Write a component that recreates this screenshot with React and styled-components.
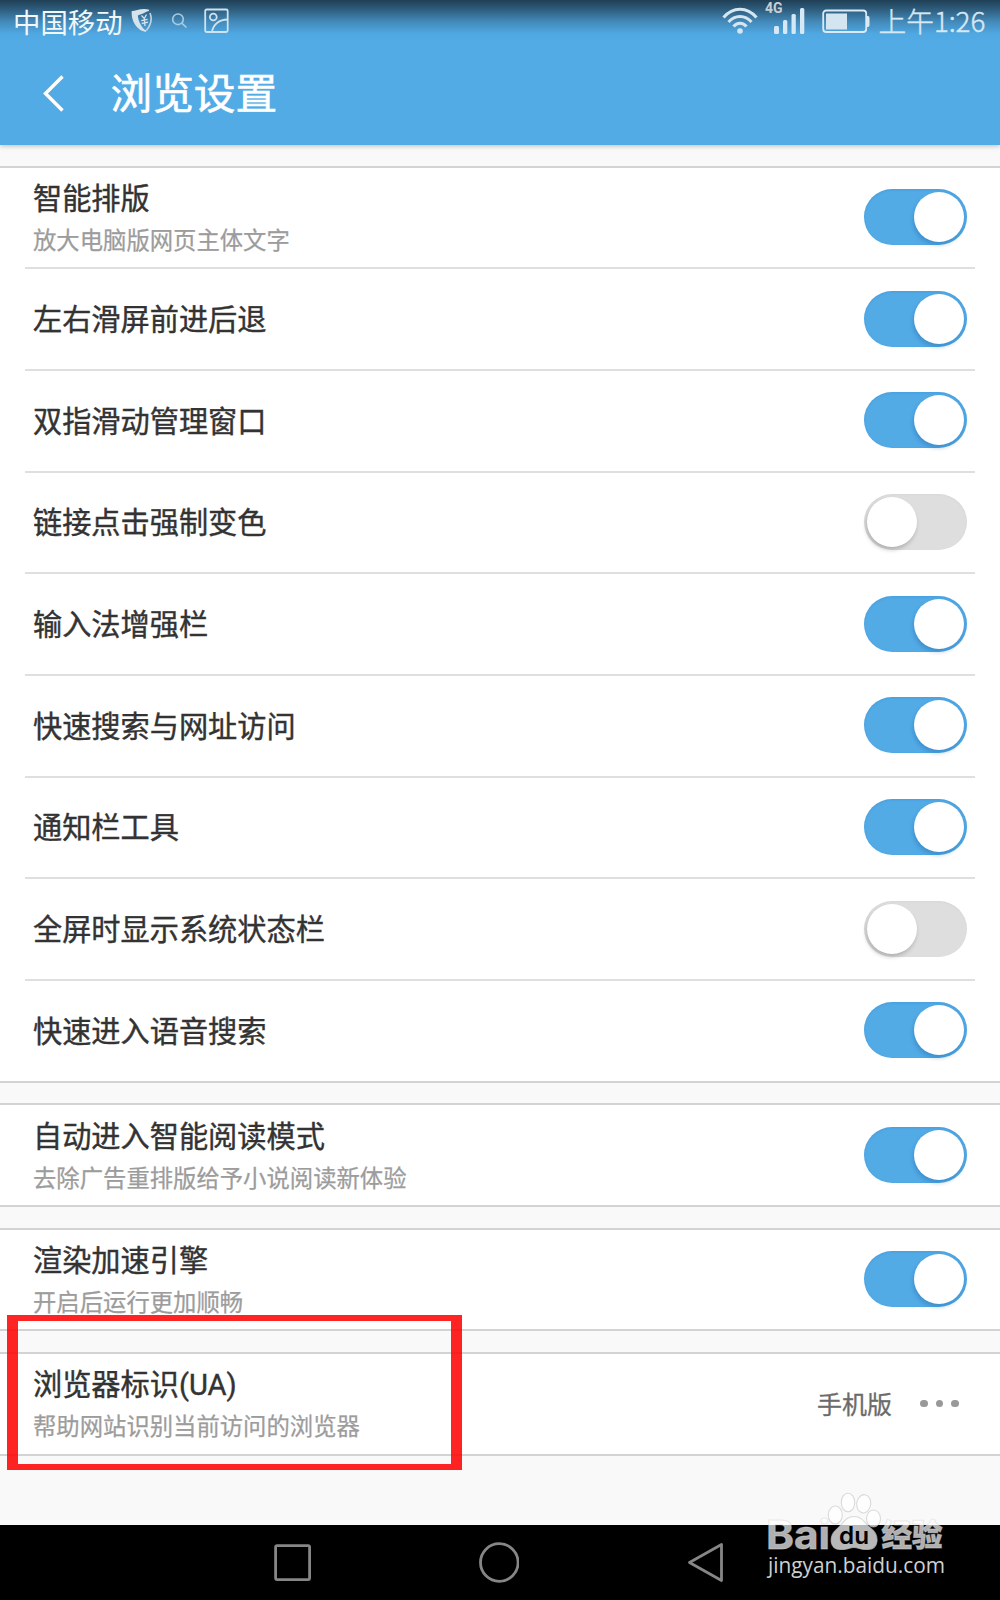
import React from "react";
import styled, { createGlobalStyle } from "styled-components";

const GlobalStyle = createGlobalStyle`
  * { box-sizing: border-box; }
  body {
    margin: 0;
    background: #f9f9f9;
    font-family: Roboto, "Noto Sans CJK SC", sans-serif;
  }
`;

const Screen = styled.div`
  position: relative;
  display: flex;
  flex-direction: column;
  width: 1000px;
  height: 1600px;
  overflow: hidden;
  background: #f9f9f9;
`;

const Header = styled.header`
  height: 145px;
  flex: none;
  background: linear-gradient(#1f3f55 0, #2f5f80 10px, #438bbb 22px, #50a8e2 34px, #53abe6 42px);
  box-shadow: 0 1px 5px rgba(0, 0, 0, 0.25);
`;

const StatusBar = styled.div`
  display: flex;
  justify-content: space-between;
  height: 42px;
  padding: 0 11px 0 13px;
`;

const StatusGroup = styled.div`
  display: flex;
  align-items: flex-start;
`;

const Carrier = styled.span`
  width: 118px;
  padding-top: 3px;
  color: #f2f7fa;
  font-size: 27.4px;
  line-height: 42px;
  white-space: nowrap;
`;

const Clock = styled.span`
  width: 110.5px;
  color: #d6e8f4;
  font-family: "Noto Sans CJK SC", sans-serif;
  font-weight: 300;
  font-size: 27.7px;
  line-height: 41px;
  white-space: nowrap;
  -webkit-text-stroke: 0.45px #d6e8f4;
`;

const TitleBar = styled.div`
  display: flex;
  align-items: center;
  height: 103px;
  padding-left: 42px;
`;

const Title = styled.h1`
  margin: 2px 0 0 46.5px;
  color: #fff;
  font-size: 41.7px;
  font-weight: 400;
  line-height: 60px;
  -webkit-text-stroke: 0.6px #fff;
`;

const Main = styled.main`
  display: flex;
  flex-direction: column;
  gap: 20.7px;
  flex: 1;
  padding-top: 20.7px;
`;

const Section = styled.section`
  padding: 0 25px;
  background: #fff;
  border-top: 2px solid #d3d3d3;
  border-bottom: 2px solid #d3d3d3;
`;

const Row = styled.div`
  display: flex;
  align-items: center;
  justify-content: space-between;
  height: ${(p) => (p.$single ? 99.7 : 101.65)}px;
  padding: 0 8px 1px;
  &:first-child {
    height: 99.7px;
  }
  & + & {
    border-top: 2px solid #dfdfdf;
  }
`;

const Labels = styled.div`
  display: flex;
  flex-direction: column;
  padding-top: ${(p) => (p.$stacked ? 6 : 3)}px;
`;

const Label = styled.span`
  color: #333;
  font-size: 29.2px;
  font-weight: 400;
  line-height: 42px;
  -webkit-text-stroke: 0.4px #333;
`;

const Hint = styled.span`
  color: #9c9c9c;
  font-size: 23.35px;
  line-height: 42px;
  -webkit-text-stroke: 0.25px #9c9c9c;
`;

const Track = styled.span`
  display: flex;
  justify-content: ${(p) => (p.$on ? "flex-end" : "flex-start")};
  width: 103px;
  height: 56px;
  padding: 3px 3px 3px 2.5px;
  border-radius: 28px;
  background: ${(p) => (p.$on ? "#53abe6" : "#dedede")};
  box-shadow: inset 0 1px 3px ${(p) => (p.$on ? "rgba(20,110,190,.2)" : "rgba(0,0,0,.03)")};
`;

const Knob = styled.span`
  width: 50px;
  height: 50px;
  border-radius: 50%;
  background: #fff;
  box-shadow: -1px 3px 4px ${(p) => (p.$on ? "rgba(10,80,150,.3)" : "rgba(0,0,0,.2)")};
`;

const Choice = styled.div`
  display: flex;
  align-items: center;
  gap: 28px;
  padding-right: 8.5px;
  color: #6b6b6b;
  font-size: 25px;
  -webkit-text-stroke: 0.3px #6b6b6b;
`;

const Dots = styled.div`
  display: flex;
  gap: 8px;
`;

const Dot = styled.i`
  width: 7.5px;
  height: 7.5px;
  border-radius: 50%;
  background: #999;
`;

const NavBar = styled.nav`
  display: flex;
  flex: none;
  align-items: flex-start;
  height: 75px;
  padding: 16px 0 0 273px;
  background: #000;
`;

const NavIcon = styled.svg`
  flex: none;
  width: 42px;
  height: 43px;
  margin-right: ${(p) => p.$after || 0}px;
  fill: none;
  stroke: #868686;
  stroke-width: 2.8;
  stroke-linejoin: round;
`;

const Highlight = styled.div`
  position: absolute;
  left: 7px;
  top: 1315px;
  width: 455px;
  height: 155px;
  border: solid rgba(255, 0, 0, 0.86);
  border-width: 6px 11px;
`;

const Watermark = styled.svg`
  position: absolute;
  left: 760px;
  top: 1486px;
  width: 200px;
  height: 104px;
`;

const Glyph = styled.svg`
  flex: none;
  display: block;
  margin-top: ${(p) => p.$top || 0}px;
  margin-right: ${(p) => p.$after || 0}px;
`;

const GROUPS = [
  [
    { label: "智能排版", hint: "放大电脑版网页主体文字", on: true },
    { label: "左右滑屏前进后退", on: true },
    { label: "双指滑动管理窗口", on: true },
    { label: "链接点击强制变色", on: false },
    { label: "输入法增强栏", on: true },
    { label: "快速搜索与网址访问", on: true },
    { label: "通知栏工具", on: true },
    { label: "全屏时显示系统状态栏", on: false },
    { label: "快速进入语音搜索", on: true },
  ],
  [{ label: "自动进入智能阅读模式", hint: "去除广告重排版给予小说阅读新体验", on: true }],
  [{ label: "渲染加速引擎", hint: "开启后运行更加顺畅", on: true }],
  [{ label: "浏览器标识(UA)", hint: "帮助网站识别当前访问的浏览器", choice: "手机版" }],
];

function Toggle({ on }) {
  return (
    <Track $on={on} role="switch" aria-checked={on}>
      <Knob $on={on} />
    </Track>
  );
}

function Setting({ item, single }) {
  return (
    <Row $single={single}>
      <Labels $stacked={!!item.hint}>
        <Label>{item.label}</Label>
        {item.hint && <Hint>{item.hint}</Hint>}
      </Labels>
      {item.choice ? (
        <Choice>
          {item.choice}
          <Dots>
            <Dot />
            <Dot />
            <Dot />
          </Dots>
        </Choice>
      ) : (
        <Toggle on={item.on} />
      )}
    </Row>
  );
}

function StatusIcons() {
  return (
    <>
      <Glyph $top={8} $after={17} width="23" height="26" viewBox="0 0 23 26" fill="none">
        <path d="M18 2.500C10 0.500 7 3.500 1.500 4C1.500 13 6 21.500 15 23.200" stroke="#d5e3ec" strokeWidth="1.8" />
        <path d="M1 3.500C1 12 6 21.500 15.500 23.500C10 19 7.500 13.500 6.800 7.500C10 6.500 14 4.500 18 2.500C12 1 7 3.500 1 3.500Z" fill="#d5e3ec" />
        <path d="M19 5C21 10 20.300 16.500 15.300 22.500" stroke="#c0d5e4" strokeWidth="1.600" />
        <path d="M10.500 7.500L13.300 10.500L15.500 6.500M13.300 10.500L14 18M10.300 12.700L16.500 11.300M10.800 15.500L17 14.200" stroke="#d5e3ec" strokeWidth="1.300" />
      </Glyph>
      <Glyph $top={12} $after={16} width="17" height="17" viewBox="0 0 17 17" fill="none" stroke="#a9cbe1" strokeWidth="1.6">
        <circle cx="7" cy="7.300" r="5.300" />
        <path d="M11 11.300L15.500 15.500" />
      </Glyph>
      <Glyph $top={8} width="26" height="26" viewBox="0 0 26 26" fill="none" stroke="#cfe2ef" strokeWidth="1.8">
        <rect x="1.200" y="1.500" width="22.500" height="22.500" rx="1.500" />
        <circle cx="9.300" cy="9" r="3.400" />
        <path d="M8 24C9 16.500 15 11.500 24 11.500" />
      </Glyph>
    </>
  );
}

function SignalIcons() {
  return (
    <>
      <Glyph $top={7} $after={7} width="36" height="28" viewBox="0 0 36 28" fill="none" stroke="#d6e6f1" strokeWidth="3">
        <path d="M1.500 10.500C11 -0.500 25 -0.500 34.500 10.500" />
        <path d="M6.500 15C13 7.500 23 7.500 29.500 15" />
        <path d="M11.500 19.500C15 15 21 15 24.500 19.500" />
        <circle cx="18" cy="24" r="2.800" fill="#d6e6f1" stroke="none" />
      </Glyph>
      <Glyph $after={16} width="41" height="36" viewBox="0 0 41 36" fill="#d6e8f3">
        <text x="0" y="13" fontFamily="Roboto, sans-serif" fontWeight="700" fontSize="14" fill="#c3d0d9">4G</text>
        <rect x="9" y="26" width="5" height="8" rx="1.500" />
        <rect x="18" y="20" width="4.300" height="14" rx="1.500" />
        <rect x="26.500" y="14" width="4.300" height="20" rx="1.500" />
        <rect x="35" y="8" width="4.300" height="26" rx="1.500" />
      </Glyph>
      <Glyph $top={8} $after={8.5} width="48" height="25" viewBox="0 0 48 25">
        <rect x="1.200" y="2.500" width="43" height="21.500" rx="3" fill="none" stroke="#dae9f3" strokeWidth="1.800" />
        <rect x="4" y="5.500" width="21" height="16" fill="#d3e5f1" />
        <path d="M45 8H46Q47.500 8 47.500 10V17Q47.500 19 46 19H45Z" fill="#dae9f3" />
      </Glyph>
    </>
  );
}

function BaiduMark() {
  return (
    <Watermark viewBox="760 1486 200 104">
      <g fill="#fff" fillOpacity=".72" stroke="#c8c8c8" strokeOpacity=".65" strokeWidth="1.1">
        <ellipse cx="835.300" cy="1515" rx="7" ry="9" />
        <ellipse cx="848" cy="1502.500" rx="6.700" ry="9.300" />
        <ellipse cx="863.700" cy="1503.800" rx="7" ry="9.200" transform="rotate(8 863.700 1503.800)" />
        <ellipse cx="873.500" cy="1518.500" rx="7" ry="8.500" />
        <path d="M854 1516.500C863 1516.500 865 1524 871 1528.500C880 1535 879 1549.500 868 1549.500C862 1550 858 1547.500 854 1547.500C850 1547.500 846 1550 840 1549.500C829 1549 829 1536 836 1530C843 1524 845 1516.500 854 1516.500Z" />
      </g>
      <text x="839" y="1544" fontFamily="Inter, sans-serif" fontWeight="600" fontSize="24" textLength="30" lengthAdjust="spacingAndGlyphs" fill="#000">du</text>
      <g fill="#fff" fillOpacity=".7" stroke="#d8d8d8" strokeOpacity=".5" strokeWidth="1">
        <text x="766" y="1548.500" fontFamily="Inter, sans-serif" fontWeight="700" fontSize="39.500" textLength="64" lengthAdjust="spacingAndGlyphs">Bai</text>
        <text x="881.500" y="1545.500" fontFamily="Noto Sans CJK SC, sans-serif" fontWeight="900" fontSize="30.500">经验</text>
      </g>
      <text x="768" y="1572.500" fontFamily="Open Sans, sans-serif" fontWeight="500" fontSize="21" textLength="177" lengthAdjust="spacingAndGlyphs" fill="#d0d0d0">jingyan.baidu.com</text>
    </Watermark>
  );
}

export default function App() {
  return (
    <Screen>
      <GlobalStyle />
      <Header>
        <StatusBar>
          <StatusGroup>
            <Carrier>中国移动</Carrier>
            <StatusIcons />
          </StatusGroup>
          <StatusGroup>
            <SignalIcons />
            <Clock>上午1:26</Clock>
          </StatusGroup>
        </StatusBar>
        <TitleBar>
          <Glyph width="22" height="38" viewBox="0 0 22 38" fill="none" stroke="#fff" strokeWidth="3.4">
            <path d="M20.500 1.500L3.500 18.500L20.500 35.500" />
          </Glyph>
          <Title>浏览设置</Title>
        </TitleBar>
      </Header>
      <Main>
        {GROUPS.map((group, i) => (
          <Section key={i}>
            {group.map((item) => (
              <Setting key={item.label} item={item} single={group.length === 1} />
            ))}
          </Section>
        ))}
      </Main>
      <NavBar>
        <NavIcon $after={162} viewBox="0 0 42 43">
          <rect x="2.600" y="4.600" width="34" height="34" rx="1.500" />
        </NavIcon>
        <NavIcon $after={168} viewBox="0 0 42 43">
          <circle cx="22.300" cy="21.500" r="18.800" />
        </NavIcon>
        <NavIcon viewBox="0 0 42 43">
          <path d="M34.500 3.500V39.500L2.500 21.500Z" />
        </NavIcon>
      </NavBar>
      <Highlight />
      <BaiduMark />
    </Screen>
  );
}
